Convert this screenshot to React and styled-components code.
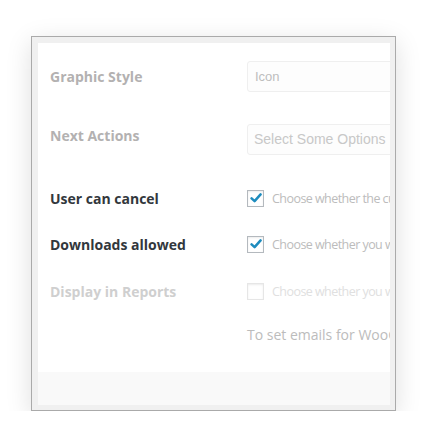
import React from "react"
import styled, { createGlobalStyle } from "styled-components"

const GlobalStyle = createGlobalStyle`
  html, body {
    margin: 0;
    padding: 0;
    background: #ffffff;
  }
  body {
    font-family: "Open Sans", "Liberation Sans", sans-serif;
  }
`

const rows = [
  { label: "Graphic Style", kind: "select", value: "Icon", tone: "muted", top: 18, lift: 0 },
  { label: "Next Actions", kind: "select", value: "Select Some Options", tone: "muted", top: 32, large: true, lift: 4 },
  { label: "User can cancel", kind: "check", checked: true, text: "Choose whether the customer can cancel", tone: "dark", top: 28 },
  { label: "Downloads allowed", kind: "check", checked: true, text: "Choose whether you want to allow", tone: "dark", top: 16 },
  { label: "Display in Reports", kind: "check", checked: false, text: "Choose whether you want to display", tone: "faint", top: 17 },
  { label: "", kind: "note", text: "To set emails for WooCommerce orders", top: 13 },
]

export default function App() {
  return (
    <>
      <GlobalStyle />
      <Frame>
        <Panel>
          <Body>
            {rows.map((row, i) => (
              <Row key={i} $top={row.top}>
                <Label $tone={row.tone} $lift={row.lift || 0}>
                  {row.label}
                </Label>
                <Field>
                  {row.kind === "select" && (
                    <SelectBox $large={row.large}>{row.value}</SelectBox>
                  )}
                  {row.kind === "check" && (
                    <>
                      <Checkbox $faint={row.tone === "faint"}>
                        {row.checked && (
                          <svg width="12" height="12" viewBox="0 0 12 12">
                            <path
                              d="M1.6 6.4 L4.6 9.2 L10.6 2.4"
                              fill="none"
                              stroke="#1e8cbe"
                              strokeWidth="2.5"
                              strokeLinecap="round"
                              strokeLinejoin="round"
                            />
                          </svg>
                        )}
                      </Checkbox>
                      <Hint $faint={row.tone === "faint"}>{row.text}</Hint>
                    </>
                  )}
                  {row.kind === "note" && <Note>{row.text}</Note>}
                </Field>
              </Row>
            ))}
          </Body>
          <Footer />
        </Panel>
      </Frame>
    </>
  )
}

const Frame = styled.div`
  box-sizing: border-box;
  margin: 36px 0 0 31px;
  width: 365px;
  height: 375px;
  border: 1px solid #aaaaaa;
  background: #f0f0f0;
  padding: 6px 5px 5px 6px;
  box-shadow: 0 6px 24px rgba(0, 0, 0, 0.13);
`

const Panel = styled.div`
  display: flex;
  flex-direction: column;
  height: 100%;
  overflow: hidden;
  background: #ffffff;
`

const Body = styled.div`
  flex: 1;
  display: flex;
  flex-direction: column;
`

const Footer = styled.div`
  height: 33px;
  flex: none;
  background: #f9f9f9;
`

const Row = styled.div`
  display: flex;
  align-items: center;
  min-height: 30px;
  margin-top: ${(p) => p.$top}px;
  padding-left: 12px;
`

const toneColor = {
  muted: "#b3b1b1",
  dark: "#32373c",
  faint: "#cfcfcf",
}

const Label = styled.div`
  width: 197px;
  flex: none;
  font-size: 14px;
  font-weight: 700;
  color: ${(p) => toneColor[p.$tone] || "#b3b1b1"};
  white-space: nowrap;
  position: relative;
  top: -${(p) => p.$lift}px;
`

const Field = styled.div`
  flex: 1;
  display: flex;
  align-items: center;
  gap: 8px;
  min-width: 0;
  white-space: nowrap;
`

const SelectBox = styled.div`
  box-sizing: border-box;
  width: 300px;
  flex: none;
  height: 31px;
  line-height: 29px;
  padding-left: ${(p) => (p.$large ? 6 : 7)}px;
  border: 1px solid #efefef;
  border-radius: 3px;
  background: #fdfdfd;
  font-family: "Liberation Sans", Arial, sans-serif;
  font-size: ${(p) => (p.$large ? 14 : 13)}px;
  color: ${(p) => (p.$large ? "#c8c8c8" : "#bdbdbd")};
`

const Checkbox = styled.span`
  box-sizing: border-box;
  display: inline-flex;
  align-items: center;
  justify-content: center;
  flex: none;
  width: 17px;
  height: 17px;
  border: 1px solid ${(p) => (p.$faint ? "#e6e6e6" : "#b4b9be")};
  background: #ffffff;
  box-shadow: inset 0 1px 2px rgba(0, 0, 0, 0.08);
`

const Hint = styled.span`
  font-size: 12.5px;
  letter-spacing: -0.55px;
  color: ${(p) => (p.$faint ? "#e0e0e0" : "#bcbcbc")};
`

const Note = styled.span`
  font-size: 14px;
  color: #bcbcbc;
`
